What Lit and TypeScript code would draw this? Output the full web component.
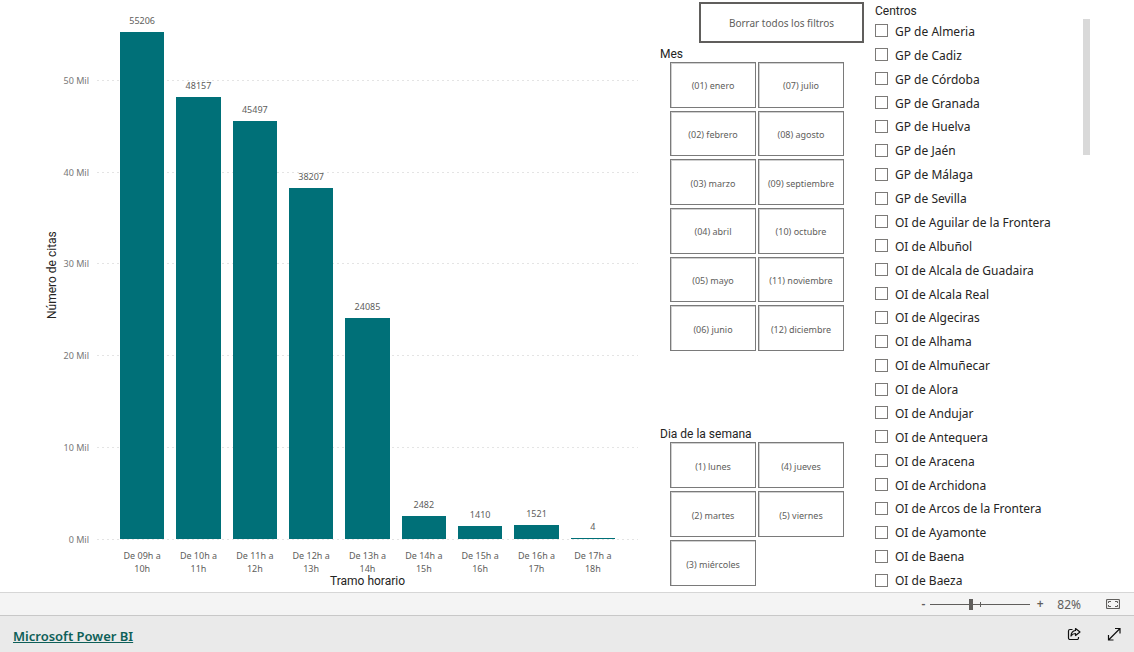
import { LitElement, html, css } from "lit";
import { customElement, property, state } from "lit/decorators.js";

const SCALE_TOP = 55300;
const STEP = 10000;

const SLOTS = [
  { label: "De 09h a 10h", value: 55206 },
  { label: "De 10h a 11h", value: 48157 },
  { label: "De 11h a 12h", value: 45497 },
  { label: "De 12h a 13h", value: 38207 },
  { label: "De 13h a 14h", value: 24085 },
  { label: "De 14h a 15h", value: 2482 },
  { label: "De 15h a 16h", value: 1410 },
  { label: "De 16h a 17h", value: 1521 },
  { label: "De 17h a 18h", value: 4 },
];

const MONTHS = [
  "(01) enero", "(02) febrero", "(03) marzo", "(04) abril", "(05) mayo", "(06) junio",
  "(07) julio", "(08) agosto", "(09) septiembre", "(10) octubre", "(11) noviembre", "(12) diciembre",
];

const DAYS = ["(1) lunes", "(2) martes", "(3) miércoles", "(4) jueves", "(5) viernes"];

const CENTRES = [
  "GP de Almeria", "GP de Cadiz", "GP de Córdoba", "GP de Granada", "GP de Huelva", "GP de Jaén",
  "GP de Málaga", "GP de Sevilla", "OI de Aguilar de la Frontera", "OI de Albuñol",
  "OI de Alcala de Guadaira", "OI de Alcala Real", "OI de Algeciras", "OI de Alhama",
  "OI de Almuñecar", "OI de Alora", "OI de Andujar", "OI de Antequera", "OI de Aracena",
  "OI de Archidona", "OI de Arcos de la Frontera", "OI de Ayamonte", "OI de Baena", "OI de Baeza",
];

@customElement("bar-chart")
export class BarChart extends LitElement {
  static styles = css`
    :host {
      display: grid;
      grid-template-columns: 13px 38px minmax(0, 1fr);
      grid-template-rows: minmax(0, 1fr) 34px 16px;
      padding: 31px 22px 3px 46px;
      box-sizing: border-box;
      font-size: 9px;
      line-height: 13px;
      color: #605e5c;
    }
    .axis-title {
      font: 12px/16px Roboto, sans-serif;
      color: #252423;
      text-align: center;
    }
    .vertical {
      writing-mode: vertical-rl;
      transform: rotate(180deg);
      line-height: 13px;
      padding-top: 20px;
    }
    .horizontal {
      grid-column: 3;
    }
    .ticks,
    .lines {
      display: flex;
      flex-direction: column-reverse;
    }
    .tick {
      flex: none;
      box-sizing: border-box;
      padding-right: 8px;
      text-align: right;
      white-space: nowrap;
      color: #777;
    }
    .tick span {
      display: block;
      margin-top: -6px;
    }
    .plot {
      display: grid;
    }
    .lines,
    .bars {
      grid-area: 1 / 1;
    }
    .line {
      flex: none;
      background: repeating-linear-gradient(90deg, #e4e4e4 0 2px, transparent 2px 5px) 0 0 / 100% 1px no-repeat;
    }
    .base {
      height: 1px;
      margin-bottom: -1px;
    }
    .bars,
    .labels {
      display: grid;
      grid-template-columns: repeat(9, minmax(0, 1fr));
      column-gap: 12px;
      padding: 0 23px;
    }
    .slot {
      display: flex;
      flex-direction: column;
      justify-content: flex-end;
      align-items: center;
    }
    .value {
      flex: none;
      margin: -18px 0 5px;
    }
    .bar {
      flex: none;
      width: 100%;
      min-height: 1px;
      background: #007078;
    }
    .labels {
      grid-column: 3;
      padding-top: 10px;
      text-align: center;
    }
  `;

  render() {
    const steps = [0, 1, 2, 3, 4, 5];
    const height = (v: number) => `height:${(v / SCALE_TOP) * 100}%`;
    return html`
      <div class="axis-title vertical">Número de citas</div>
      <div class="ticks">
        ${steps.map((n) => html`<div class="tick" style=${height(n ? STEP : 0)}><span>${n * 10} Mil</span></div>`)}
      </div>
      <div class="plot">
        <div class="lines">
          <div class="line base"></div>
          ${steps.slice(1).map(() => html`<div class="line" style=${height(STEP)}></div>`)}
        </div>
        <div class="bars">
          ${SLOTS.map(
            (s) => html`<div class="slot">
              <span class="value">${s.value}</span>
              <div class="bar" style=${height(s.value)}></div>
            </div>`
          )}
        </div>
      </div>
      <div class="labels">${SLOTS.map((s) => html`<span>${s.label}</span>`)}</div>
      <div class="axis-title horizontal">Tramo horario</div>
    `;
  }
}

@customElement("tile-slicer")
export class TileSlicer extends LitElement {
  @property() heading = "";
  @property({ attribute: false }) items: string[] = [];
  @property({ type: Number }) rows = 1;
  @state() private picked = "";

  static styles = css`
    :host {
      display: block;
    }
    .heading {
      margin: 0;
      padding-top: 1px;
      font: 12px/16px Roboto, sans-serif;
      color: #252423;
    }
    .tiles {
      display: grid;
      grid-auto-flow: column;
      grid-auto-columns: minmax(0, 1fr);
      gap: 3px 2px;
      margin-left: 10px;
    }
    .six {
      grid-template-rows: repeat(6, 1fr);
      height: 289px;
    }
    .three {
      grid-template-rows: repeat(3, 1fr);
      height: 144px;
    }
    .tile {
      border: 1px solid #7a7a7a;
      background: #fff;
      padding: 2px 0 0;
      font: inherit;
      font-size: 9px;
      color: #605e5c;
      box-shadow: inset 1px 1px 0 #d0d0d0;
    }
    .tile[aria-pressed="true"] {
      background: #e6e6e6;
    }
  `;

  render() {
    return html`
      <h2 class="heading">${this.heading}</h2>
      <div class="tiles ${this.rows === 6 ? "six" : "three"}">
        ${this.items.map(
          (t) => html`<button
            class="tile"
            aria-pressed=${this.picked === t}
            @click=${() => (this.picked = this.picked === t ? "" : t)}
          >${t}</button>`
        )}
      </div>
    `;
  }
}

@customElement("centre-list")
export class CentreList extends LitElement {
  static styles = css`
    :host {
      display: flex;
      flex-direction: column;
      min-height: 0;
    }
    .heading {
      margin: 0;
      padding-top: 3px;
      font: 12px/16px Roboto, sans-serif;
      color: #252423;
    }
    .scroller {
      flex: 1;
      display: flex;
      justify-content: space-between;
      padding-right: 44px;
    }
    .list {
      display: grid;
      grid-auto-rows: 1fr;
      margin: 0;
      padding: 0;
      list-style: none;
    }
    .option {
      display: flex;
      align-items: center;
      gap: 7px;
      height: 100%;
      font-size: 12px;
      line-height: 16px;
      color: #252423;
      white-space: nowrap;
    }
    .name {
      padding-top: 2px;
    }
    .box {
      appearance: none;
      box-sizing: border-box;
      width: 13px;
      height: 13px;
      margin: 0;
      border: 1px solid #7c7a78;
      background: #fff;
    }
    .box:checked {
      background: #605e5c;
    }
    .thumb {
      width: 7px;
      height: 136px;
      background: #d9d9d9;
    }
  `;

  render() {
    return html`
      <h2 class="heading">Centros</h2>
      <div class="scroller">
        <ul class="list">
          ${CENTRES.map(
            (c) => html`<li>
              <label class="option"><input class="box" type="checkbox" /><span class="name">${c}</span></label>
            </li>`
          )}
        </ul>
        <div class="thumb"></div>
      </div>
    `;
  }
}

@customElement("app-root")
export class AppRoot extends LitElement {
  static styles = css`
    :host {
      display: flex;
      flex-direction: column;
      min-height: 100vh;
      background: #fff;
      font-family: "Noto Sans", "Open Sans", sans-serif;
    }
    .report {
      flex: 1;
      display: grid;
      grid-template-columns: minmax(0, 1fr) 215px 259px;
    }
    .filters {
      display: flex;
      flex-direction: column;
      padding-top: 2px;
    }
    .clear {
      align-self: flex-end;
      width: 165px;
      height: 41px;
      margin-right: 11px;
      border: 2px solid #605e5c;
      background: #fff;
      font: inherit;
      font-size: 10px;
      color: #605e5c;
    }
    .slicer {
      margin: 2px 31px 0 0;
    }
    .days {
      margin-top: 74px;
    }
    .zoom {
      display: flex;
      align-items: center;
      justify-content: flex-end;
      height: 22px;
      padding-right: 14px;
      border-top: 1px solid #d6d6d6;
      background: #f4f4f4;
      font-size: 12px;
      color: #605e5c;
    }
    .step {
      width: 14px;
      padding: 0;
      border: 0;
      background: none;
      font: inherit;
      font-weight: 600;
      line-height: 16px;
      color: inherit;
    }
    .range {
      appearance: none;
      width: 100px;
      height: 13px;
      margin: 0 3px 0 0;
      background:
        linear-gradient(#605e5c, #605e5c) 50% 50% / 1px 5px no-repeat,
        linear-gradient(#605e5c, #605e5c) 0 50% / 100% 1px no-repeat;
    }
    .range::-webkit-slider-thumb {
      appearance: none;
      width: 4px;
      height: 11px;
      background: #605e5c;
    }
    .percent {
      margin: 0 25px 0 10px;
    }
    .icon {
      display: block;
      padding: 0;
      border: 0;
      background: none;
      color: #111;
    }
    .icon svg {
      display: block;
      fill: none;
      stroke: currentColor;
    }
    .fit {
      color: #605e5c;
    }
    .footer {
      display: flex;
      align-items: center;
      height: 36px;
      gap: 26px;
      padding: 0 13px;
      border-top: 1px solid #c8c8c8;
      background: #eaeaea;
    }
    .brand {
      margin: 4px auto 0 0;
      font-size: 13px;
      font-weight: 600;
      line-height: 18px;
      color: #0e5f58;
    }
  `;

  render() {
    return html`
      <main class="report">
        <bar-chart></bar-chart>
        <section class="filters">
          <button class="clear">Borrar todos los filtros</button>
          <tile-slicer class="slicer" heading="Mes" rows="6" .items=${MONTHS}></tile-slicer>
          <tile-slicer class="slicer days" heading="Dia de la semana" rows="3" .items=${DAYS}></tile-slicer>
        </section>
        <centre-list></centre-list>
      </main>
      <div class="zoom">
        <button class="step" aria-label="Alejar">-</button>
        <input class="range" type="range" min="0" max="100" value="40" aria-label="Zoom" />
        <button class="step" aria-label="Acercar">+</button>
        <span class="percent">82%</span>
        <button class="icon fit" aria-label="Ajustar a la página">
          <svg width="14" height="12" viewBox="0 0 14 12">
            <rect x="0.5" y="1.5" width="13" height="9" rx="1" stroke-width="1.2" />
            <path d="M2.500 5V3.500H5M9 3.500h2.500V5M11.500 7V8.500H9M5 8.500H2.500V7" />
          </svg>
        </button>
      </div>
      <footer class="footer">
        <a class="brand" href="#">Microsoft Power BI</a>
        <button class="icon" aria-label="Compartir">
          <svg width="14" height="14" viewBox="0 0 14 14" stroke-width="1.2">
            <path d="M5.500 2.500H3A1.500 1.500 0 0 0 1.500 4v7A1.500 1.500 0 0 0 3 12.500h7A1.500 1.500 0 0 0 11.500 11v-1" />
            <path d="M8.500 1.500 13 5 8.500 8.500V6.500C6.500 6.500 5.200 7.200 4 9 4.200 6 5.800 3.800 8.500 3.500Z" stroke-linejoin="round" />
          </svg>
        </button>
        <button class="icon" aria-label="Pantalla completa">
          <svg width="14" height="14" viewBox="0 0 14 14" stroke-width="1.200">
            <path d="M1.500 13 13 1.500M8 1.500h5v5M1.500 8v5h5" />
          </svg>
        </button>
      </footer>
    `;
  }
}
